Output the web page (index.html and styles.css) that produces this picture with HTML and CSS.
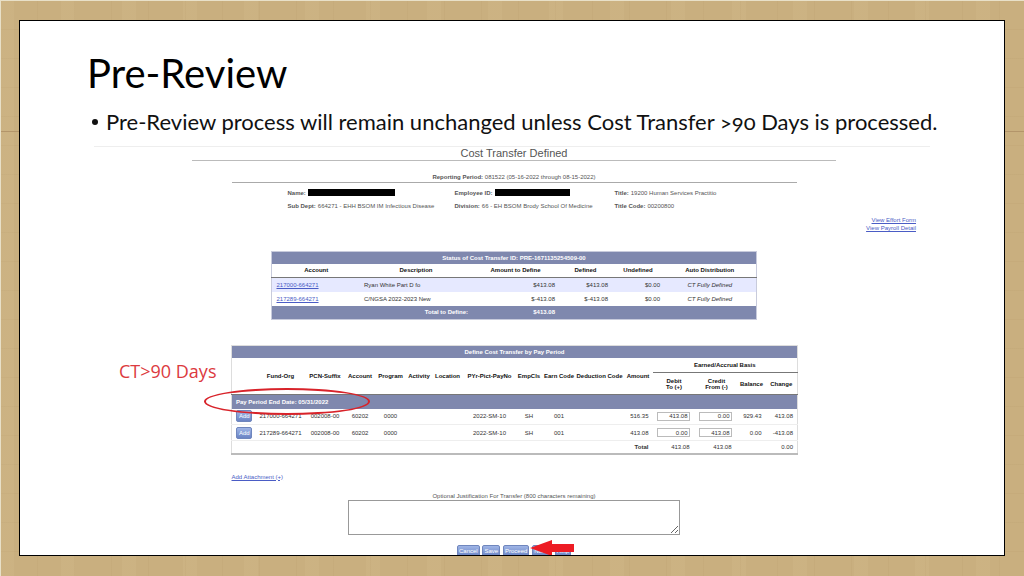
FILE: index.html
```html
<!DOCTYPE html>
<html lang="en">
<head>
    <meta charset="UTF-8">
    <meta name="viewport" content="width=device-width, initial-scale=1.0">
    <title>Pre-Review</title>
    <link rel="stylesheet" href="styles.css">
</head>
<body>

<main class="sheet">
    <h1 class="title">Pre-Review</h1>
    <ul class="points">
        <li>Pre-Review process will remain unchanged unless Cost Transfer &gt;90 Days is processed.</li>
    </ul>

    <section class="panel">
        <h2 class="panel-title">Cost Transfer Defined</h2>

        <div class="period"><b>Reporting Period:</b> 081522 (05-16-2022 through 08-15-2022)</div>

        <div class="info">
            <div><b>Name:</b> <span class="redacted name"></span></div>
            <div><b>Employee ID:</b> <span class="redacted emp"></span></div>
            <div><b>Title:</b> 19200 Human Services Practitio</div>
            <div><b>Sub Dept:</b> 664271 - EHH BSOM IM Infectious Disease</div>
            <div><b>Division:</b> 66 - EH BSOM Brody School Of Medicine</div>
            <div><b>Title Code:</b> 00200800</div>
        </div>

        <nav class="links">
            <a href="#">View Effort Form</a>
            <a href="#">View Payroll Detail</a>
        </nav>

        <table class="grid status">
            <colgroup>
                <col class="w88"><col class="w112"><col class="w87"><col class="w53"><col class="w52"><col class="w92">
            </colgroup>
            <thead>
                <tr class="bar"><th colspan="6">Status of Cost Transfer ID: PRE-1671135254509-00</th></tr>
                <tr class="heads">
                    <th>Account</th>
                    <th>Description</th>
                    <th>Amount to Define</th>
                    <th>Defined</th>
                    <th>Undefined</th>
                    <th>Auto Distribution</th>
                </tr>
            </thead>
            <tbody>
                <tr class="alt">
                    <td><a href="#">217000-664271</a></td>
                    <td>Ryan White Part D fo</td>
                    <td class="num">$413.08</td>
                    <td class="num">$413.08</td>
                    <td class="num">$0.00</td>
                    <td class="auto">CT Fully Defined</td>
                </tr>
                <tr>
                    <td><a href="#">217289-664271</a></td>
                    <td>C/NGSA 2022-2023 New</td>
                    <td class="num">$-413.08</td>
                    <td class="num">$-413.08</td>
                    <td class="num">$0.00</td>
                    <td class="auto">CT Fully Defined</td>
                </tr>
            </tbody>
            <tfoot>
                <tr class="bar">
                    <td colspan="2" class="num">Total to Define:</td>
                    <td class="num">$413.08</td>
                    <td colspan="3"></td>
                </tr>
            </tfoot>
        </table>

        <div class="define-wrap">
            <table class="grid define">
                <colgroup>
                    <col class="w25"><col class="w48"><col class="w41"><col class="w29"><col class="w32"><col class="w25"><col class="w32"><col class="w52"><col class="w27"><col class="w33"><col class="w48"><col class="w29"><col class="w43"><col class="w42"><col class="w28"><col class="w32">
                </colgroup>
                <thead>
                    <tr class="bar"><th colspan="16">Define Cost Transfer by Pay Period</th></tr>
                    <tr class="heads top">
                        <th rowspan="2"></th>
                        <th rowspan="2">Fund-Org</th>
                        <th rowspan="2">PCN-Suffix</th>
                        <th rowspan="2">Account</th>
                        <th rowspan="2">Program</th>
                        <th rowspan="2">Activity</th>
                        <th rowspan="2">Location</th>
                        <th rowspan="2">PYr-Pict-PayNo</th>
                        <th rowspan="2">EmpCls</th>
                        <th rowspan="2">Earn Code</th>
                        <th rowspan="2">Deduction Code</th>
                        <th rowspan="2">Amount</th>
                        <th colspan="4">Earned/Accrual Basis</th>
                    </tr>
                    <tr class="heads sub">
                        <th>Debit<br>To (+)</th>
                        <th>Credit<br>From (-)</th>
                        <th>Balance</th>
                        <th>Change</th>
                    </tr>
                </thead>
                <tbody>
                    <tr class="bar period-row"><th colspan="16">Pay Period End Date: 05/31/2022</th></tr>
                    <tr class="line">
                        <td><button type="button" class="btn">Add</button></td>
                        <td>217000-664271</td>
                        <td>002008-00</td>
                        <td>60202</td>
                        <td>0000</td>
                        <td></td>
                        <td></td>
                        <td>2022-SM-10</td>
                        <td>SH</td>
                        <td>001</td>
                        <td></td>
                        <td class="num">516.35</td>
                        <td class="num entry"><input type="text" aria-label="Debit" value="413.08"></td>
                        <td class="num entry"><input type="text" aria-label="Credit" value="0.00"></td>
                        <td class="num">929.43</td>
                        <td class="num">413.08</td>
                    </tr>
                    <tr class="line">
                        <td><button type="button" class="btn">Add</button></td>
                        <td>217289-664271</td>
                        <td>002008-00</td>
                        <td>60202</td>
                        <td>0000</td>
                        <td></td>
                        <td></td>
                        <td>2022-SM-10</td>
                        <td>SH</td>
                        <td>001</td>
                        <td></td>
                        <td class="num">413.08</td>
                        <td class="num entry"><input type="text" aria-label="Debit" value="0.00"></td>
                        <td class="num entry"><input type="text" aria-label="Credit" value="413.08"></td>
                        <td class="num">0.00</td>
                        <td class="num">-413.08</td>
                    </tr>
                </tbody>
                <tfoot>
                    <tr>
                        <td colspan="11"></td>
                        <th class="num">Total</th>
                        <td class="num entry">413.08</td>
                        <td class="num entry">413.08</td>
                        <td></td>
                        <td class="num">0.00</td>
                    </tr>
                </tfoot>
            </table>
            <span class="note">CT&gt;90 Days</span>
            <span class="circle"></span>
        </div>

        <div class="attach"><a href="#">Add Attachment (+)</a></div>

        <div class="justify">
            <label for="reason">Optional Justification For Transfer (800 characters remaining)</label>
            <textarea id="reason"></textarea>
        </div>

        <div class="actions">
            <button type="button" class="btn">Cancel</button>
            <button type="button" class="btn">Save</button>
            <button type="button" class="btn">Proceed</button>
            <button type="button" class="btn">Notes</button>
            <button type="button" class="btn">Help</button>
            <svg class="arrow" viewBox="0 0 44 16" aria-hidden="true">
                <path d="M0 8 L22 0 V4 H44 V12 H22 V16 Z" fill="#ed1c24"/>
            </svg>
        </div>
    </section>
</main>

</body>
</html>
```
FILE: styles.css
```css
* {
    box-sizing: border-box;
}
body {
    margin: 0;
    height: 100vh;
    padding: 20px 19px;
    display: flex;
    background-color: #c9af7f;
    background-image:
        linear-gradient(transparent 131px, #b3956a 131px, #b3956a 132px, transparent 132px),
        repeating-linear-gradient(90deg, rgba(120, 80, 30, 0.04) 0 1px, transparent 1px 37px),
        repeating-linear-gradient(90deg, rgba(255, 235, 190, 0.06) 0 14px, transparent 14px 61px),
        repeating-linear-gradient(rgba(120, 80, 30, 0.04) 0 1px, transparent 1px 29px);
    box-shadow: inset 1px 1px 0 #e8e0c8;
    font-family: "Liberation Sans", Arial, sans-serif;
}
.sheet {
    flex: 1;
    min-width: 0;
    padding: 0 74px;
    border: 1px solid #000;
    background-color: #fff;
    overflow: hidden;
}
.title {
    margin: 24px 0 0 -7px;
    font-family: Lato, "Open Sans", sans-serif;
    font-size: 40px;
    font-weight: 400;
    line-height: 56px;
    color: #000;
}
.points {
    margin: 6px 0 0;
    padding: 0;
    list-style: none;
    font-family: Lato, "Open Sans", sans-serif;
    font-size: 22px;
    font-variant-numeric: oldstyle-nums;
    line-height: 30px;
    white-space: nowrap;
    color: #111;
}
.points li {
    display: flex;
    align-items: center;
    gap: 8px;
    margin-left: -2px;
}
.points li::before {
    content: "";
    flex: none;
    width: 6px;
    height: 6px;
    border-radius: 50%;
    background-color: #111;
}
.panel {
    margin-top: 9px;
    padding-left: 4px;
    border-top: 1px solid #eee;
    font-size: 6px;
    line-height: 8px;
    color: #555;
}
.panel a {
    color: #4a5cc5;
}
.panel-title {
    max-width: 644px;
    margin: 0 auto;
    border-bottom: 1px solid #bbb;
    font-size: 11px;
    font-weight: 400;
    line-height: 13px;
    text-align: center;
}
.period {
    max-width: 565px;
    margin: 12px auto 0;
    padding-bottom: 1px;
    border-bottom: 1px solid #aaa;
    text-align: center;
}
.info {
    max-width: 453px;
    margin: 6px auto 0;
    display: grid;
    grid-template-columns: 167px 160px 1fr;
    row-gap: 5px;
}
.info div {
    display: flex;
    gap: 2px;
    white-space: nowrap;
}
.redacted {
    height: 7px;
    background-color: #000;
}
.name {
    width: 87px;
}
.emp {
    width: 75px;
}
.links {
    margin-top: 6px;
    padding-right: 14px;
    display: flex;
    flex-direction: column;
    align-items: flex-end;
}
.grid {
    width: 100%;
    margin: 0 auto;
    border-collapse: collapse;
    table-layout: fixed;
    color: #333;
}
.grid th,
.grid td {
    padding: 0;
    white-space: nowrap;
}
.grid .bar {
    background-color: #7f88ae;
    color: #fff;
    font-weight: bold;
}
.grid .num {
    text-align: right;
}
.heads {
    color: #111;
    border-bottom: 1px solid #777;
}
.status {
    max-width: 484px;
    margin-top: 19px;
    border: 1px solid #c8cbdc;
}
.status tr {
    height: 14px;
}
.status thead .bar {
    height: 12px;
}
.status td {
    padding: 0 4px;
}
.status .alt {
    background-color: #e6e9ff;
}
.status .auto {
    text-align: center;
    font-style: italic;
}
.define-wrap {
    position: relative;
    max-width: 566px;
    margin: 25px auto 0;
}
.define {
    text-align: center;
    border: 1px solid #ddd;
    border-bottom: 2px solid #bbb;
}
.define .bar {
    height: 12px;
}
.define .top {
    height: 15px;
    border-bottom: 0;
}
.define .top th:last-child {
    border-bottom: 1px solid #777;
}
.define .sub {
    height: 22px;
    line-height: 6px;
}
.define .period-row {
    height: 14px;
}
.define .period-row th {
    padding-left: 4px;
    text-align: left;
}
.define .line {
    height: 16px;
    border-bottom: 1px solid #eee;
}
.define tfoot tr {
    height: 13px;
}
.define td.num,
.define th.num {
    padding-right: 4px;
}
.define td.entry {
    padding-right: 6px;
}
.define input {
    display: block;
    width: 33px;
    height: 9px;
    margin-left: auto;
    padding: 0 1px;
    border: 1px solid #bbb;
    background-color: #fff;
    font: inherit;
    text-align: right;
    color: inherit;
}
.btn {
    height: 12px;
    padding: 0 1px;
    border: 1px solid #6f86bd;
    border-radius: 2px;
    background: linear-gradient(#9fb5e6, #6a83c4);
    font-family: inherit;
    font-size: 6px;
    line-height: 8px;
    color: #fff;
}
.define .btn {
    display: block;
    width: 16px;
    margin: 0 auto;
}
.note {
    position: absolute;
    left: -112px;
    top: 14px;
    font-family: "Open Sans", "Noto Sans", sans-serif;
    font-size: 18px;
    line-height: 24px;
    color: #dc3a40;
}
.circle {
    position: absolute;
    left: -27px;
    top: 43px;
    width: 166px;
    height: 27px;
    border: 2px solid #d8232a;
    border-radius: 50%;
}
.attach {
    max-width: 565px;
    margin: 18px auto 0;
}
.justify {
    max-width: 332px;
    margin: 11px auto 0;
    text-align: center;
}
.justify label {
    display: block;
}
.justify textarea {
    display: block;
    width: 100%;
    height: 35px;
    border: 1px solid #999;
    resize: vertical;
}
.actions {
    position: relative;
    width: 114px;
    margin: 10px auto 0;
    display: flex;
    justify-content: space-between;
}
.arrow {
    position: absolute;
    left: 73px;
    top: -5px;
    width: 44px;
    height: 16px;
}
.w25 { width: 25px; }
.w27 { width: 27px; }
.w28 { width: 28px; }
.w29 { width: 29px; }
.w32 { width: 32px; }
.w33 { width: 33px; }
.w41 { width: 41px; }
.w42 { width: 42px; }
.w43 { width: 43px; }
.w48 { width: 48px; }
.w52 { width: 52px; }
.w53 { width: 53px; }
.w87 { width: 87px; }
.w88 { width: 88px; }
.w92 { width: 92px; }
.w112 { width: 112px; }
```
